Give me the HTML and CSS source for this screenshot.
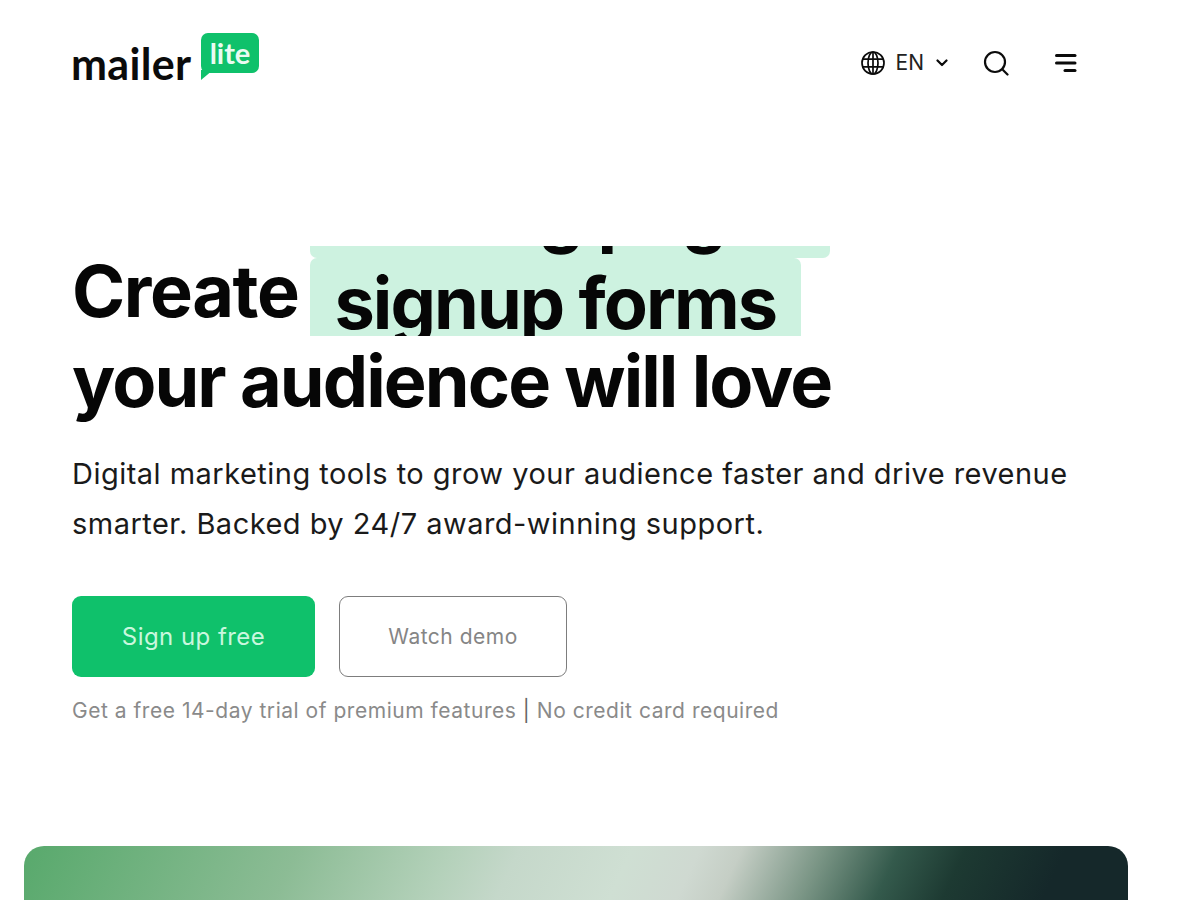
FILE: index.html
```html
<!DOCTYPE html>
<html lang="en">
<head>
<meta charset="utf-8">
<title>MailerLite</title>
<link rel="stylesheet" href="styles.css">
</head>
<body>
<header class="nav">
  <a class="logo">
    <span class="logo-word">mailer</span>
    <span class="logo-badge">lite
      <svg class="logo-tail" width="12" height="10" viewBox="0 0 12 10"><path d="M0 0h12L0 10z" fill="#0fc16b"/></svg>
    </span>
  </a>
  <div class="nav-tools">
    <div class="lang">
      <svg width="26" height="26" viewBox="0 0 26 26" fill="none" stroke="#0b0b0b" stroke-width="1.7"><circle cx="13" cy="13" r="11"/><ellipse cx="13" cy="13" rx="5" ry="11"/><path d="M3 9.2h20M3 16.800h20M13 2v22"/></svg>
      <span class="lang-code">EN</span>
      <svg class="chevron" width="12" height="8" viewBox="0 0 12 8" fill="none" stroke="#0b0b0b" stroke-width="2.200" stroke-linecap="round" stroke-linejoin="round"><path d="M1.500 1.500 6 6l4.500-4.500"/></svg>
    </div>
    <svg class="search" width="26" height="26" viewBox="0 0 26 26" fill="none" stroke="#0b0b0b" stroke-width="2.200" stroke-linecap="round"><circle cx="12" cy="12" r="10"/><path d="m19.500 19.500 5 5"/></svg>
    <svg class="menu" width="24" height="20" viewBox="0 0 24 20" fill="#0b0b0b"><rect x="1" y="1" width="21.500" height="3" rx="1.500"/><rect x="1" y="8.500" width="21.500" height="3" rx="1.500"/><rect x="9.500" y="16" width="13" height="3" rx="1.500"/></svg>
  </div>
</header>
<main class="hero">
  <h1 class="headline">
    <span class="line first">
      <span class="lead-word">Create</span>
      <span class="rotator">
        <span class="track">
          <span class="chip chip-a">landing pages</span>
          <span class="chip chip-b">signup forms</span>
        </span>
      </span>
    </span>
    <span class="line">your audience will love</span>
  </h1>
  <p class="lead">Digital marketing tools to grow your audience faster and drive revenue smarter. Backed by 24/7 award-winning support.</p>
  <div class="actions">
    <a class="btn btn-primary">Sign up free</a>
    <a class="btn btn-outline">Watch demo</a>
  </div>
  <p class="note">Get a free 14-day trial of premium features <span class="bar">|</span> No credit card required</p>
</main>
<div class="media"></div>
</body>
</html>
```
FILE: styles.css
```css
* { box-sizing: border-box; }
html, body { margin: 0; height: 900px; overflow: hidden; }
body { display: flex; flex-direction: column; background: #fff; font-family: Inter, "Liberation Sans", sans-serif; color: #0b0b0b; }
.nav { display: flex; justify-content: space-between; align-items: flex-start; padding: 33px 122px 0 71px; height: 246px; flex: none; }
.logo { display: flex; align-items: flex-start; gap: 10px; }
.logo-word { width: 120px; font-family: Lato, sans-serif; font-size: 43px; font-weight: 700; letter-spacing: 0.300px; line-height: 48px; margin-top: 7px; color: #0b0b0b; }
.logo-badge { position: relative; width: 58px; height: 40px; background: #0fc16b; border-radius: 7px; color: #eafbf2; font-family: Lato, sans-serif; font-weight: 700; font-size: 29px; letter-spacing: 0; line-height: 40px; text-align: center; }
.logo-tail { position: absolute; left: 0; top: 37px; }
.nav-tools { display: flex; align-items: center; padding-top: 17px; }
.lang { display: flex; align-items: center; gap: 10px; margin-right: 35px; }
.lang-code { font-size: 21px; line-height: 26px; font-weight: 400; color: #222; }
.chevron { margin-left: 2px; }
.search { margin-right: 45px; }
.headline { margin: 0; font-size: 72px; font-weight: 700; letter-spacing: -1.900px; line-height: 90px; color: #060606; }
.hero { padding: 0 72px; flex: none; }
.line { display: block; }
.first { display: flex; align-items: flex-start; gap: 12px; height: 90px; }
.lead-word { letter-spacing: -1.400px; }
.rotator { width: 520px; height: 90px; overflow: hidden; }
.track { display: block; margin-top: -78px; }
.chip { display: block; height: 90px; background: #cdf2e0; border-radius: 7px; padding-left: 24px; line-height: 90px; width: 491px; }
.chip-a { width: 520px; }
.lead { margin: 23px 0 0; font-size: 29px; line-height: 50px; width: 1020px; color: #1a1a1a; letter-spacing: 0.480px; }
.actions { display: flex; gap: 24px; margin-top: 47px; }
.btn { display: flex; align-items: center; justify-content: center; height: 81px; border-radius: 9px; }
.btn-primary { width: 243px; background: #0fc16b; color: #c9f7de; font-size: 24px; letter-spacing: 0.450px; }
.btn-outline { width: 228px; border: 1.500px solid #7d7d7d; color: #858585; font-size: 21px; letter-spacing: 0.500px; }
.note { margin: 17px 0 0; font-size: 21px; line-height: 34px; color: #8a8a8a; letter-spacing: 0.530px; }
.bar { color: #666; }
.media { flex: none; margin: auto 72px 0 24px; width: 1104px; height: 54px; border-radius: 20px 20px 0 0; background: linear-gradient(115deg, #58a96c 0%, #8cbc95 24.400%, #b4d1ba 38%, #c5d8ca 44%, #cfdfd3 54%, #cfd9d1 60%, #c5cec5 63.700%, #7a9585 71%, #345a4c 77.600%, #1d3a32 83.500%, #15282a 92.400%); }
```
